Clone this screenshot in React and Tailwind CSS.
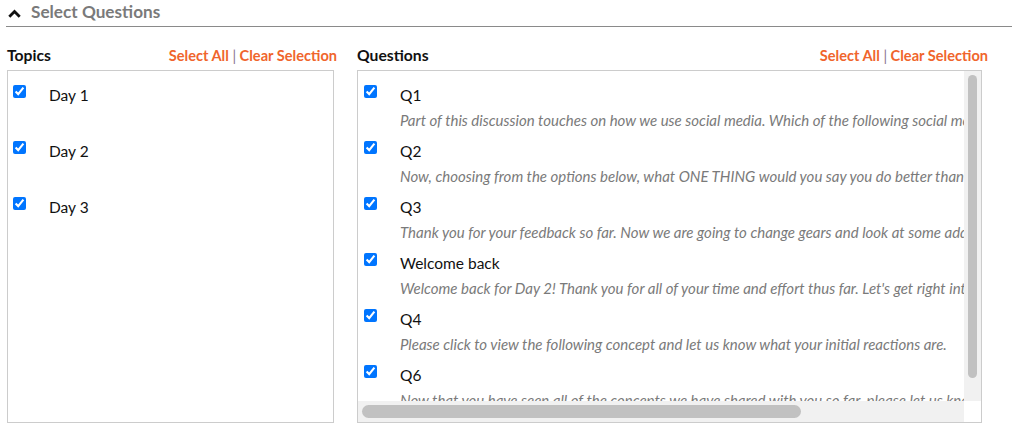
const topics = ["Day 1", "Day 2", "Day 3"];

const questions = [
  {
    title: "Q1",
    text: "Part of this discussion touches on how we use social media. Which of the following social media platforms do you use on a regular basis?",
  },
  {
    title: "Q2",
    text: "Now, choosing from the options below, what ONE THING would you say you do better than anyone else you know?",
  },
  {
    title: "Q3",
    text: "Thank you for your feedback so far. Now we are going to change gears and look at some additional ideas we have been working on.",
  },
  {
    title: "Welcome back",
    text: "Welcome back for Day 2! Thank you for all of your time and effort thus far. Let's get right into it with a few more questions.",
  },
  {
    title: "Q4",
    text: "Please click to view the following concept and let us know what your initial reactions are.",
  },
  {
    title: "Q6",
    text: "Now that you have seen all of the concepts we have shared with you so far, please let us know which one you liked best.",
  },
];

function Links() {
  return (
    <div className="text-[14.6px] leading-[18px] font-bold text-[#f0652c] whitespace-nowrap">
      Select All <span className="font-normal text-[#8a7390]">|</span> Clear Selection
    </div>
  );
}

function Check() {
  return (
    <input
      type="checkbox"
      checked
      readOnly
      className="w-[13px] h-[13px] m-0 shrink-0 accent-[#0075ff]"
    />
  );
}

export default function App() {
  return (
    <div className="w-[1012px] h-[426px] bg-white pl-[6px] font-['Lato',sans-serif] overflow-hidden">
      {/* Section header */}
      <div className="h-[27px] border-b border-[#8a8a8a] flex items-center gap-[10px] pl-[2px] pb-[2px]">
        <svg width="13" height="9" viewBox="0 0 13 9" className="mt-[3px]">
          <polyline
            points="1.3,7.8 6.5,2.6 11.7,7.8"
            fill="none"
            stroke="#111"
            strokeWidth="2.8"
          />
        </svg>
        <span className="text-[17.2px] font-bold text-[#7a7a7a]">Select Questions</span>
      </div>

      <div className="flex gap-[20px] mt-[20px] pl-[1px]">
        {/* Topics */}
        <div className="w-[330px] flex flex-col">
          <div className="flex items-center justify-between h-[18px] mb-[5px]">
            <span className="text-[15.7px] font-bold text-[#111]">Topics</span>
            <Links />
          </div>
          <div className="w-[327px] h-[353px] border border-[#cccccc] pt-[14px] pl-[5px]">
            {topics.map((t) => (
              <div key={t} className="h-[56px] flex items-start gap-[23px]">
                <Check />
                <span className="mt-[1px] text-[15.5px] leading-[18px] text-[#111]">{t}</span>
              </div>
            ))}
          </div>
        </div>

        {/* Questions */}
        <div className="w-[631px] flex flex-col">
          <div className="flex items-center justify-between h-[18px] mb-[5px]">
            <span className="text-[15.7px] font-bold text-[#111]">Questions</span>
            <Links />
          </div>
          <div className="w-[625px] h-[353px] border border-[#cccccc] flex flex-col">
            <div className="flex flex-1 min-h-0">
              <div className="flex-1 min-w-0 overflow-hidden pt-[14px] pl-[6px]">
                {questions.map((q) => (
                  <div key={q.title} className="h-[56px] flex items-start gap-[23px]">
                    <Check />
                    <div className="flex flex-col whitespace-nowrap">
                      <span className="mt-[1px] text-[15.5px] leading-[18px] text-[#111]">{q.title}</span>
                      <span className="mt-[7px] text-[15px] leading-[18px] italic text-[#7a7a7a]">{q.text}</span>
                    </div>
                  </div>
                ))}
              </div>
              {/* vertical scrollbar */}
              <div className="w-[17px] bg-[#f1f1f1] flex justify-center pt-[4px]">
                <div className="w-[9px] h-[303px] rounded-full bg-[#c1c1c1]" />
              </div>
            </div>
            {/* horizontal scrollbar */}
            <div className="h-[21px] flex">
              <div className="flex-1 bg-[#f1f1f1] flex items-center pl-[4px]">
                <div className="w-[439px] h-[13px] rounded-full bg-[#c1c1c1]" />
              </div>
              <div className="w-[17px] bg-white" />
            </div>
          </div>
        </div>
      </div>
    </div>
  );
}
